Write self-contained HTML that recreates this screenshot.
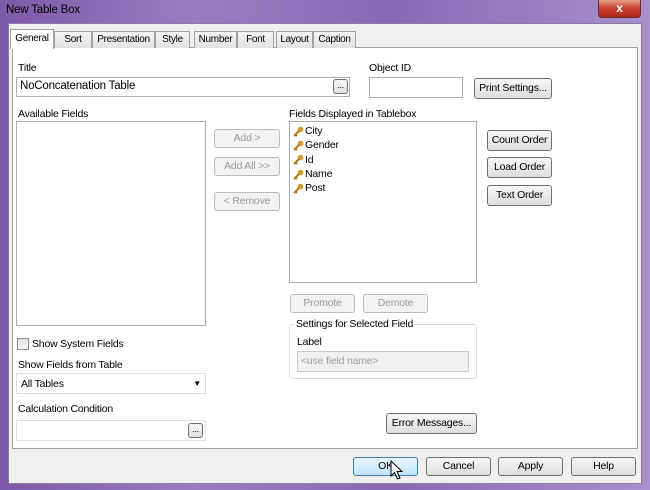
<!DOCTYPE html>
<html><head><style>
*{box-sizing:border-box;margin:0;padding:0}
body{width:650px;height:490px;overflow:hidden;font-family:"Liberation Sans",sans-serif;font-size:10.5px;letter-spacing:-0.2px;color:#000;position:relative;background:#6a4a9a}
.a{position:absolute}
.frame{left:0;top:0;width:650px;height:490px;background:linear-gradient(90deg,#7d5aa8,#9a7cc0 30%,#8a68b4 60%,#a890cc 100%)}
.dlg{left:8px;top:23px;width:634px;height:461px;background:#f0f0f0;border:1px solid #8a7aa8}
.btn{position:absolute;border:1px solid #707070;border-radius:3px;background:linear-gradient(#f6f6f6,#dedede);text-align:center;line-height:19px;height:21px;white-space:nowrap}
.dis{border-color:#bcbcbc;color:#9a9a9a;background:#f2f2f2}
.box{position:absolute;background:#fff;border:1px solid #abadb3}
.tab{position:absolute;top:31px;height:17px;border:1px solid #a0a0a0;border-bottom:none;background:linear-gradient(#f4f4f4,#e2e2e2);line-height:15px;text-align:center;white-space:nowrap;font-size:10px;letter-spacing:-0.3px}
.it{height:14.3px;display:flex;align-items:center}
.it svg{margin-right:1px}
</style></head><body>
<div class="a frame"></div>
<div class="a" style="left:6px;top:4px;font-size:11.5px;color:#000">New Table Box</div>
<div class="a" style="left:598px;top:0;width:43px;height:18px;border:1px solid #6b2a2a;border-top:none;border-radius:0 0 4px 4px;background:linear-gradient(#e8a090,#c8402c 50%,#b02818);color:#fff;font-weight:bold;text-align:center;line-height:16px;font-size:12px">x</div>
<div class="a dlg"></div>
<div class="a" style="left:12px;top:47px;width:626px;height:402px;background:#fff;border:1px solid #a0a0a0"></div>
<div class="tab" style="left:54px;width:38px">Sort</div>
<div class="tab" style="left:92px;width:63px">Presentation</div>
<div class="tab" style="left:155px;width:35px">Style</div>
<div class="tab" style="left:194px;width:43px">Number</div>
<div class="tab" style="left:237px;width:37px">Font</div>
<div class="tab" style="left:276px;width:37px">Layout</div>
<div class="tab" style="left:313px;width:43px">Caption</div>
<div class="tab" style="left:10px;top:29px;width:44px;height:20px;background:#fff;line-height:17px">General</div>

<div class="a" style="left:18px;top:62px">Title</div>
<div class="box" style="left:16px;top:77px;width:334px;height:20px;padding:2px 3px;font-size:11.5px">NoConcatenation Table</div>
<div class="btn" style="left:333px;top:79px;width:15px;height:15px;line-height:10px;font-size:9px">...</div>
<div class="a" style="left:369px;top:62px">Object ID</div>
<div class="box" style="left:369px;top:77px;width:94px;height:21px"></div>
<div class="btn" style="left:474px;top:78px;width:78px">Print Settings...</div>

<div class="a" style="left:18px;top:108px">Available Fields</div>
<div class="box" style="left:16px;top:121px;width:190px;height:205px"></div>
<div class="btn dis" style="left:214px;top:129px;width:66px;height:19px;line-height:17px">Add &gt;</div>
<div class="btn dis" style="left:214px;top:157px;width:66px;height:19px;line-height:17px">Add All &gt;&gt;</div>
<div class="btn dis" style="left:214px;top:192px;width:66px;height:19px;line-height:17px">&lt; Remove</div>

<div class="a" style="left:289px;top:108px">Fields Displayed in Tablebox</div>
<div class="box" style="left:289px;top:121px;width:188px;height:162px;padding:2px 3px">
<div class="it"><svg width="11" height="11" viewBox="0 0 11 11"><circle cx="7.5" cy="3.5" r="2.8" fill="#d29a2a"/><path d="M6 5 L1 10 M2.5 8.5 L4 10" stroke="#b07818" stroke-width="2"/></svg>City</div>
<div class="it"><svg width="11" height="11" viewBox="0 0 11 11"><circle cx="7.5" cy="3.5" r="2.8" fill="#d29a2a"/><path d="M6 5 L1 10 M2.5 8.5 L4 10" stroke="#b07818" stroke-width="2"/></svg>Gender</div>
<div class="it"><svg width="11" height="11" viewBox="0 0 11 11"><circle cx="7.5" cy="3.5" r="2.8" fill="#d29a2a"/><path d="M6 5 L1 10 M2.5 8.5 L4 10" stroke="#b07818" stroke-width="2"/></svg>Id</div>
<div class="it"><svg width="11" height="11" viewBox="0 0 11 11"><circle cx="7.5" cy="3.5" r="2.8" fill="#d29a2a"/><path d="M6 5 L1 10 M2.5 8.5 L4 10" stroke="#b07818" stroke-width="2"/></svg>Name</div>
<div class="it"><svg width="11" height="11" viewBox="0 0 11 11"><circle cx="7.5" cy="3.5" r="2.8" fill="#d29a2a"/><path d="M6 5 L1 10 M2.5 8.5 L4 10" stroke="#b07818" stroke-width="2"/></svg>Post</div>
</div>
<div class="btn" style="left:487px;top:130px;width:65px">Count Order</div>
<div class="btn" style="left:487px;top:157px;width:65px">Load Order</div>
<div class="btn" style="left:487px;top:185px;width:65px">Text Order</div>

<div class="btn dis" style="left:290px;top:294px;width:65px;height:19px;line-height:17px">Promote</div>
<div class="btn dis" style="left:363px;top:294px;width:65px;height:19px;line-height:17px">Demote</div>
<div class="a" style="left:289px;top:324px;width:188px;height:55px;border:1px solid #d5dfe5;border-radius:3px"></div>
<div class="a" style="left:294px;top:318px;background:#fff;padding:0 2px">Settings for Selected Field</div>
<div class="a" style="left:297px;top:336px">Label</div>
<div class="a" style="left:297px;top:351px;width:172px;height:21px;background:#f0f0f0;border:1px solid #c8c8c8;color:#a0a0a0;padding:3px 3px">&lt;use field name&gt;</div>

<div class="a" style="left:17px;top:338px;width:12px;height:12px;border:1px solid #8e8f8f;background:linear-gradient(#e0e0e0,#f8f8f8)"></div>
<div class="a" style="left:32px;top:338px">Show System Fields</div>
<div class="a" style="left:18px;top:359px">Show Fields from Table</div>
<div class="box" style="left:16px;top:373px;width:190px;height:21px;padding:4px 4px;border-color:#e0e0e0">All Tables<span style="position:absolute;right:4px;top:5px;font-size:8px">&#9660;</span></div>
<div class="a" style="left:18px;top:403px">Calculation Condition</div>
<div class="box" style="left:16px;top:420px;width:190px;height:21px;border-color:#e0e0e0"></div>
<div class="btn" style="left:188px;top:423px;width:15px;height:15px;line-height:10px;font-size:9px">...</div>

<div class="btn" style="left:386px;top:413px;width:91px">Error Messages...</div>

<div class="btn" style="left:353px;top:457px;width:65px;height:19px;line-height:17px;border-color:#3c7fb1;background:linear-gradient(#eaf6fd,#bee6fd)">OK</div>
<svg class="a" style="left:390px;top:460px" width="14" height="20" viewBox="0 0 14 20"><path d="M1 1 L1 16 L4.5 12.5 L7.5 19 L10 18 L7 11.5 L12 11.5 Z" fill="#fff" stroke="#000" stroke-width="1"/></svg>
<div class="btn" style="left:426px;top:457px;width:65px;height:19px;line-height:17px">Cancel</div>
<div class="btn" style="left:498px;top:457px;width:65px;height:19px;line-height:17px">Apply</div>
<div class="btn" style="left:571px;top:457px;width:65px;height:19px;line-height:17px">Help</div>
</body></html>
